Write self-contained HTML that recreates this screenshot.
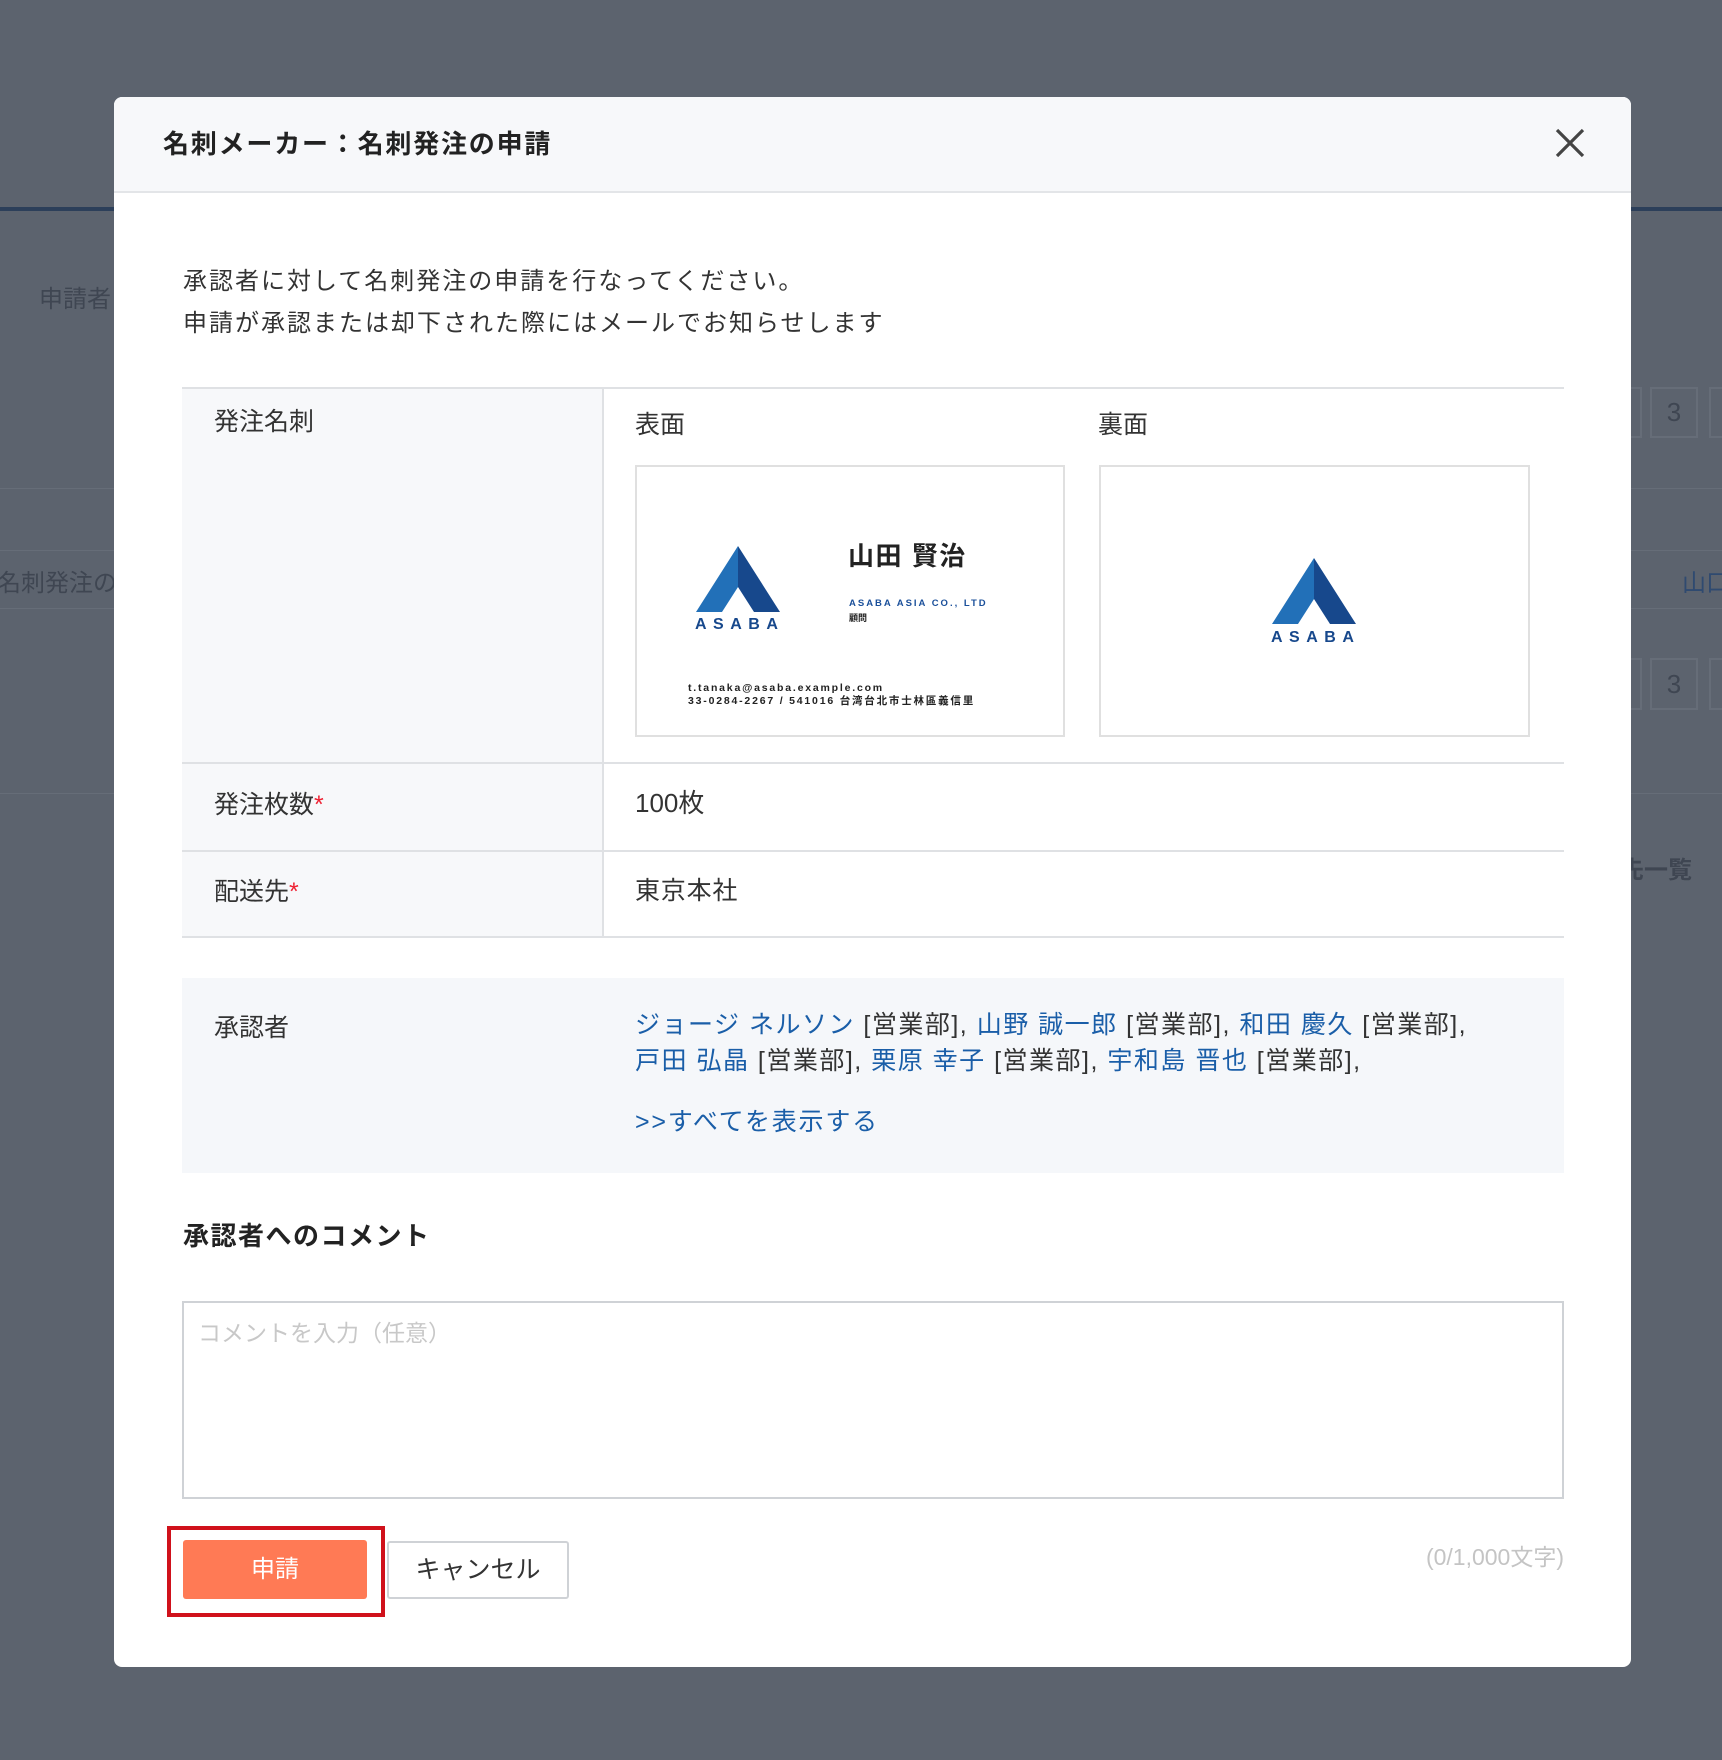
<!DOCTYPE html>
<html><head><meta charset="utf-8"><style>
*{margin:0;padding:0;box-sizing:border-box}
body{width:1722px;height:1760px;background:#5c636e;position:relative;overflow:hidden;font-family:"Liberation Sans","Noto Sans CJK JP",sans-serif;color:#333}
.a{position:absolute;white-space:nowrap}
.bg{color:#3f4652;font-size:24px}
.ln{position:absolute;height:1px;background:#666d78}
.bx{position:absolute;border:2px solid #666d78;color:#3f4652;font-size:26px;text-align:center}
#m{position:absolute;left:114px;top:97px;width:1517px;height:1570px;background:#fff;border-radius:8px;overflow:hidden}
#hd{position:absolute;left:0;top:0;width:100%;height:96px;background:#f7f8fa;border-bottom:2px solid #e3e5e8}
.lbl{background:#f7f8fa}
.t24{font-size:24px}
.lk{color:#1a5ea8}
</style></head><body>
<div class="ln" style="left:0;top:207px;width:1722px;height:4px;background:#2c3f5a"></div>
<div class="a bg" style="left:39px;top:279px">申請者</div>
<div class="ln" style="left:0;top:488px;width:1722px"></div>
<div class="ln" style="left:0;top:550px;width:1722px"></div>
<div class="ln" style="left:0;top:608px;width:1722px"></div>
<div class="ln" style="left:0;top:793px;width:1722px"></div>
<div class="a bg" style="left:-3px;top:563px">名刺発注の申</div>
<div class="a bg" style="left:1682px;top:563px;color:#2f4a70">山口</div>
<div class="a bg" style="left:1620px;top:850px;font-weight:bold">先一覧</div>
<div class="bx" style="left:1600px;top:387px;width:42px;height:51px"></div>
<div class="bx" style="left:1650px;top:387px;width:48px;height:51px;line-height:47px">3</div>
<div class="bx" style="left:1709px;top:387px;width:48px;height:51px"></div>
<div class="bx" style="left:1600px;top:658px;width:42px;height:52px"></div>
<div class="bx" style="left:1650px;top:658px;width:48px;height:52px;line-height:48px">3</div>
<div class="bx" style="left:1709px;top:658px;width:48px;height:52px"></div>

<div id="m">
<div id="hd"></div>
<div class="a" style="left:49px;top:27px;font-size:26px;font-weight:bold;color:#222;letter-spacing:1.8px">名刺メーカー：名刺発注の申請</div>
<svg class="a" style="left:1440px;top:30px" width="32" height="32" viewBox="0 0 32 32"><path d="M3 3L29 29M29 3L3 29" stroke="#444" stroke-width="3.2" fill="none"/></svg>

<div class="a t24" style="left:69px;top:164px;letter-spacing:2px;line-height:42px">承認者に対して名刺発注の申請を行なってください。<br>申請が承認または却下された際にはメールでお知らせします</div>

<!-- table -->
<div class="a" style="left:68px;top:290px;width:1382px;height:2px;background:#dfe1e4"></div>
<div class="a lbl" style="left:68px;top:292px;width:420px;height:548px"></div>
<div class="a" style="left:488px;top:290px;width:2px;height:550px;background:#dfe1e4"></div>
<div class="a" style="left:68px;top:665px;width:1382px;height:2px;background:#dfe1e4"></div>
<div class="a" style="left:68px;top:753px;width:1382px;height:2px;background:#dfe1e4"></div>
<div class="a" style="left:68px;top:839px;width:1382px;height:2px;background:#dfe1e4"></div>
<div class="a t24" style="left:100px;top:305px;font-size:25px">発注名刺</div>
<div class="a t24" style="left:521px;top:308px;font-size:25px">表面</div>
<div class="a t24" style="left:984px;top:308px;font-size:25px">裏面</div>
<div class="a t24" style="left:100px;top:688px;font-size:25px">発注枚数<span style="color:#e23">*</span></div>
<div class="a t24" style="left:100px;top:775px;font-size:25px">配送先<span style="color:#e23">*</span></div>
<div class="a" style="left:521px;top:686px;font-size:26px">100枚</div>
<div class="a" style="left:521px;top:774px;font-size:25px;letter-spacing:0.8px">東京本社</div>

<!-- front card -->
<div class="a" style="left:521px;top:368px;width:430px;height:272px;border:2px solid #e0e0e0;background:#fff"></div>
<svg class="a" style="left:582px;top:449px" width="84" height="66" viewBox="0 0 84 66"><path d="M42 0L0 66H42V41Z" fill="#2270b8"/><path d="M42 0L84 66H42V41Z" fill="#17488c"/><path d="M42 41L26 66H58Z" fill="#fff"/></svg>
<div class="a" style="left:581px;top:519px;font-size:16px;font-weight:bold;color:#17488c;letter-spacing:6.5px">ASABA</div>
<div class="a" style="left:734px;top:439px;font-size:26px;font-weight:bold;color:#222;letter-spacing:1.5px">山田 賢治</div>
<div class="a" style="left:735px;top:501px;font-size:9.5px;font-weight:bold;color:#1a4f9a;letter-spacing:2px">ASABA ASIA CO., LTD</div>
<div class="a" style="left:735px;top:514px;font-size:9px;font-weight:bold;color:#222">顧問</div>
<div class="a" style="left:574px;top:585px;font-size:10.5px;font-weight:bold;color:#222;letter-spacing:1.8px;line-height:13px">t.tanaka@asaba.example.com<br>33-0284-2267 / 541016 台湾台北市士林區義信里</div>

<!-- back card -->
<div class="a" style="left:985px;top:368px;width:431px;height:272px;border:2px solid #e0e0e0;background:#fff"></div>
<svg class="a" style="left:1158px;top:461px" width="84" height="66" viewBox="0 0 84 66"><path d="M42 0L0 66H42V41Z" fill="#2270b8"/><path d="M42 0L84 66H42V41Z" fill="#17488c"/><path d="M42 41L26 66H58Z" fill="#fff"/></svg>
<div class="a" style="left:1157px;top:532px;font-size:16px;font-weight:bold;color:#17488c;letter-spacing:6.5px">ASABA</div>

<!-- approvers -->
<div class="a" style="left:68px;top:881px;width:1382px;height:195px;background:#f5f7fa"></div>
<div class="a" style="left:100px;top:911px;font-size:25px">承認者</div>
<div class="a" style="left:521px;top:910px;line-height:36px;font-size:25px;letter-spacing:1.5px"><span class="lk">ジョージ ネルソン</span> [営業部], <span class="lk">山野 誠一郎</span> [営業部], <span class="lk">和田 慶久</span> [営業部],<br><span class="lk">戸田 弘晶</span> [営業部], <span class="lk">栗原 幸子</span> [営業部], <span class="lk">宇和島 晋也</span> [営業部],</div>
<div class="a lk" style="left:521px;top:1005px;font-size:25px;letter-spacing:1.8px">&gt;&gt;すべてを表示する</div>

<div class="a" style="left:69px;top:1119px;font-size:26px;font-weight:bold;color:#222;letter-spacing:1.5px">承認者へのコメント</div>
<div class="a" style="left:68px;top:1204px;width:1382px;height:198px;border:2px solid #cfd2d6"></div>
<div class="a" style="left:84px;top:1217px;font-size:23px;color:#c8c8c8">コメントを入力（任意）</div>

<div class="a" style="left:53px;top:1429px;width:218px;height:91px;border:4px solid #d0111b"></div>
<div class="a" style="left:69px;top:1443px;width:184px;height:59px;background:#ff7a55;border-radius:3px;color:#fff;font-size:24px;text-align:center;line-height:59px">申請</div>
<div class="a" style="left:273px;top:1444px;width:182px;height:58px;border:2px solid #cfd2d6;border-radius:3px;background:#fff;font-size:25px;text-align:center;line-height:54px">キャンセル</div>
<div class="a" style="right:67px;top:1441px;font-size:23px;color:#c4c4c4">(0/1,000文字)</div>
</div>
</body></html>
